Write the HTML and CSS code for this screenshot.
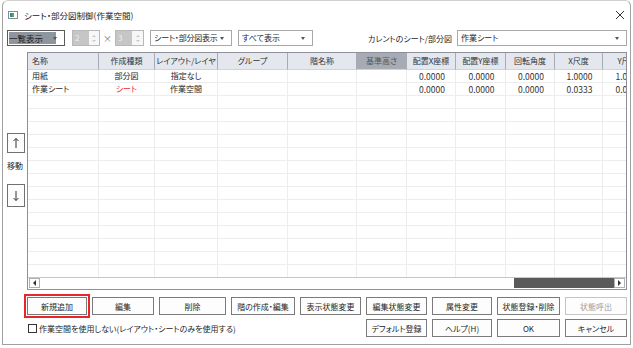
FILE: index.html
```html
<!DOCTYPE html>
<html lang="ja">
<head>
    <meta charset="UTF-8">
    <title>シート・部分図制御(作業空間)</title>
    <link rel="stylesheet" href="styles.css">
</head>
<body>

<div class="window">
    <div class="titlebar">
        <svg class="app-icon" width="10" height="8" viewBox="0 0 10 8">
            <rect x="0.5" y="0.5" width="9" height="7" fill="#fff" stroke="#8a8a8a"/>
            <rect x="2" y="2" width="2" height="4" fill="#2f7fd0"/>
            <rect x="4" y="2" width="2" height="4" fill="#4fae4f"/>
        </svg>
        <span class="title">シート・部分図制御(作業空間)</span>
        <svg class="close" width="10" height="10" viewBox="0 0 10 10">
            <path d="M1 1 L9 9 M9 1 L1 9" stroke="#333" stroke-width="1"/>
        </svg>
    </div>

    <div class="toolbar">
        <div class="combo combo-view focused"><span class="sel">一覧表示</span><i class="arrow"></i></div>
        <div class="spin spin-cols"><span class="spin-val">2</span><span class="spin-btns"><i class="up"></i><i class="down"></i></span></div>
        <span class="times">×</span>
        <div class="spin spin-rows"><span class="spin-val">3</span><span class="spin-btns"><i class="up"></i><i class="down"></i></span></div>
        <div class="combo combo-sheet"><span>シート・部分図表示</span><i class="arrow"></i></div>
        <div class="combo combo-filter"><span>すべて表示</span><i class="arrow"></i></div>
        <span class="current-label">カレントのシート/部分図</span>
        <div class="combo combo-current"><span>作業シート</span><i class="arrow"></i></div>
    </div>

    <div class="main">
        <div class="mover">
            <button class="move-btn">
                <svg width="8" height="12" viewBox="0 0 8 12"><path d="M4 1.5 V11 M1.5 4 L4 1.5 L6.5 4" fill="none" stroke="#333" stroke-width="1"/></svg>
            </button>
            <span class="move-label">移動</span>
            <button class="move-btn move-down">
                <svg width="8" height="12" viewBox="0 0 8 12"><path d="M4 1 V10.5 M1.5 8 L4 10.5 L6.5 8" fill="none" stroke="#333" stroke-width="1"/></svg>
            </button>
        </div>

        <div class="grid">
            <div class="grid-view" id="grid-body">
                <div class="row head">
                    <span class="left">名称</span>
                    <span>作成種類</span>
                    <span>レイアウト/レイヤ</span>
                    <span>グループ</span>
                    <span>階名称</span>
                    <span class="picked">基準高さ</span>
                    <span>配置X座標</span>
                    <span>配置Y座標</span>
                    <span>回転角度</span>
                    <span>X尺度</span>
                    <span>Y尺度</span>
                </div>
                <div class="row">
                    <span class="left">用紙</span>
                    <span>部分図</span>
                    <span>指定なし</span>
                    <span></span>
                    <span></span>
                    <span></span>
                    <span class="num">0.0000</span>
                    <span class="num">0.0000</span>
                    <span class="num">0.0000</span>
                    <span class="num">1.0000</span>
                    <span class="num">1.0000</span>
                </div>
                <div class="row">
                    <span class="left">作業シート</span>
                    <span class="red">シート</span>
                    <span>作業空間</span>
                    <span></span>
                    <span></span>
                    <span></span>
                    <span class="num">0.0000</span>
                    <span class="num">0.0000</span>
                    <span class="num">0.0000</span>
                    <span class="num">0.0333</span>
                    <span class="num">0.0333</span>
                </div>
            </div>
            <div class="hscroll">
                <span class="sb-btn"><i class="tri-left"></i></span>
                <span class="sb-track"><span class="sb-thumb"></span></span>
                <span class="sb-btn"><i class="tri-right"></i></span>
            </div>
        </div>
    </div>

    <div class="actions">
        <button class="btn current">新規追加</button>
        <button class="btn">編集</button>
        <button class="btn">削除</button>
        <button class="btn">階の作成・編集</button>
        <button class="btn">表示状態変更</button>
        <button class="btn">編集状態変更</button>
        <button class="btn">属性変更</button>
        <button class="btn">状態登録・削除</button>
        <button class="btn last" disabled>状態呼出</button>

        <label class="check"><span class="box"></span>作業空間を使用しない(レイアウト・シートのみを使用する)</label>
        <button class="btn">デフォルト登録</button>
        <button class="btn">ヘルプ(H)</button>
        <button class="btn">OK</button>
        <button class="btn last">キャンセル</button>
    </div>
</div>

<script>
    // empty rows below the data
    const gridBody = document.getElementById('grid-body');
    for (let i = 0; i < 14; i++) {
        const row = document.createElement('div');
        row.className = 'row';
        for (let c = 0; c < 11; c++) {
            row.appendChild(document.createElement('span'));
        }
        gridBody.appendChild(row);
    }
</script>

</body>
</html>
```

FILE: styles.css
```css
* {
    box-sizing: border-box;
}

body {
    margin: 0;
    width: 633px;
    height: 348px;
    overflow: hidden;
    background-color: #fff;
    font-family: "Noto Sans CJK JP", "Noto Sans", sans-serif;
    font-size: 8px;
    color: #1e1e1e;
    font-feature-settings: "palt";
}

.window {
    margin-left: 2px;
    width: 629px;
    height: 345px;
    border: 1px solid #a0a0a0;
    border-top-color: #d0d0d0;
    border-radius: 6px 6px 0 0;
    background-color: #fff;
    display: flex;
    flex-direction: column;
}

/* title bar */
.titlebar {
    height: 29px;
    display: flex;
    align-items: center;
    padding: 0 5px 2px 5px;
}

.app-icon {
    margin-right: 6px;
}

.title {
    font-size: 8.5px;
    color: #222;
}

.close {
    margin-left: auto;
}

/* toolbar */
.toolbar {
    height: 16px;
    display: flex;
    align-items: center;
    padding-left: 4px;
}

.combo {
    position: relative;
    height: 16px;
    border: 1px solid #a8a8a8;
    background-color: #fff;
    display: flex;
    align-items: center;
    padding-left: 3px;
    line-height: 14px;
}

.combo .arrow {
    position: absolute;
    right: 7px;
    top: 6px;
    width: 0;
    height: 0;
    border-left: 2px solid transparent;
    border-right: 2px solid transparent;
    border-top: 3px solid #555;
}

.combo-view {
    width: 58px;
    border-color: #5a5a5a;
    padding-left: 1px;
}

.combo-view .sel {
    width: 47px;
    height: 12px;
    line-height: 12px;
    background-color: #8e959e;
    color: #1c1c1c;
    font-size: 8.5px;
}

.spin {
    height: 16px;
    border: 1px solid #b8b8b8;
    display: flex;
}

.spin-cols {
    width: 28px;
    margin-left: 7px;
}

.spin-rows {
    width: 29px;
}

.spin-val {
    width: 16px;
    background-color: #c6c6c6;
    color: #eeeeee;
    line-height: 14px;
    padding-left: 2px;
}

.spin-btns {
    flex: 1;
    display: flex;
    flex-direction: column;
    align-items: center;
    justify-content: space-around;
    background-color: #f7f7f7;
    padding: 2px 0;
}

.spin-btns i {
    width: 0;
    height: 0;
    border-left: 2px solid transparent;
    border-right: 2px solid transparent;
}

.spin-btns .up {
    border-bottom: 2px solid #c8c8c8;
}

.spin-btns .down {
    border-top: 2px solid #c8c8c8;
}

.times {
    width: 15px;
    text-align: center;
    color: #777;
    font-size: 9px;
}

.combo-sheet {
    width: 82px;
    margin-left: 6px;
    letter-spacing: -0.2px;
}

.combo-filter {
    width: 75px;
    margin-left: 6px;
}

.current-label {
    margin-left: auto;
    margin-right: 5px;
}

.combo-current {
    width: 170px;
    margin-right: 3px;
}

/* main area */
.main {
    display: flex;
    margin-top: 6px;
    height: 238px;
}

.mover {
    width: 24px;
    display: flex;
    flex-direction: column;
    align-items: center;
    justify-content: center;
    padding-bottom: 2px;
}

.move-btn {
    width: 18px;
    height: 20px;
    padding: 0;
    margin-left: 1px;
    border: 1px solid #707070;
    background-color: #fdfdfd;
    display: flex;
    align-items: center;
    justify-content: center;
}

.move-down {
    height: 23px;
}

.move-label {
    margin: 6px 0 11px;
    line-height: 14px;
}

.grid {
    width: 600px;
    border: 1px solid #8d9099;
    display: flex;
    flex-direction: column;
}

.grid-view {
    flex: 1;
    overflow: hidden;
}

.row {
    display: grid;
    grid-template-columns: 71px 56px 63px 70px 69px 50px 49px 50px 49px 48px 50px;
}

.row span {
    height: 13px;
    line-height: 12px;
    border-right: 1px solid #ededed;
    border-bottom: 1px solid #ededed;
    text-align: center;
    white-space: nowrap;
    overflow: hidden;
}

.row .left {
    text-align: left;
    padding-left: 4px;
}

.row .num {
    color: #333;
    font-size: 8.5px;
    padding-left: 2px;
}

.row .red {
    color: #ee2b2b;
}

.head span {
    height: 17px;
    line-height: 16px;
    background-color: #e4e7ee;
    border-right: 1px solid #a7abb3;
    border-bottom: 1px solid #cfd2d8;
    color: #333;
}

.head .picked {
    background-color: #a7acb4;
    color: #555;
}

/* horizontal scrollbar */
.hscroll {
    height: 12px;
    display: flex;
    border-top: 1px solid #c8c8c8;
    padding: 0 1px 1px 1px;
}

.sb-btn {
    width: 11px;
    border: 1px solid #b0b0b0;
    display: flex;
    align-items: center;
    justify-content: center;
}

.sb-track {
    flex: 1;
    display: flex;
    justify-content: flex-end;
}

.sb-thumb {
    width: 100px;
    background-color: #5a5a5a;
}

.tri-left {
    width: 0;
    height: 0;
    border-top: 3px solid transparent;
    border-bottom: 3px solid transparent;
    border-right: 3px solid #333;
}

.tri-right {
    width: 0;
    height: 0;
    border-top: 3px solid transparent;
    border-bottom: 3px solid transparent;
    border-left: 3px solid #333;
}

/* buttons */
.actions {
    display: grid;
    grid-template-columns: 65px 67px 72px 69px 66px 66px 65px 68px 62px;
    grid-auto-rows: 18px;
    row-gap: 4px;
    padding-left: 24px;
    margin-top: 7px;
}

.btn {
    margin-right: 5px;
    padding: 0;
    border: 1px solid #7a7a7a;
    background-color: #fdfdfd;
    font-family: inherit;
    font-size: 8px;
    font-feature-settings: "palt";
    color: #1e1e1e;
    white-space: nowrap;
}

.btn.last {
    margin-right: 0;
}

.btn:disabled {
    border-color: #c4c4c4;
    color: #a0a0a0;
}

.btn.current {
    outline: 2px solid #e8262a;
    outline-offset: 1px;
}

.check {
    grid-column: 1 / 6;
    display: flex;
    align-items: center;
    padding-left: 1px;
}

.check .box {
    width: 9px;
    height: 9px;
    border: 1px solid #333;
    margin-right: 2px;
}
```
